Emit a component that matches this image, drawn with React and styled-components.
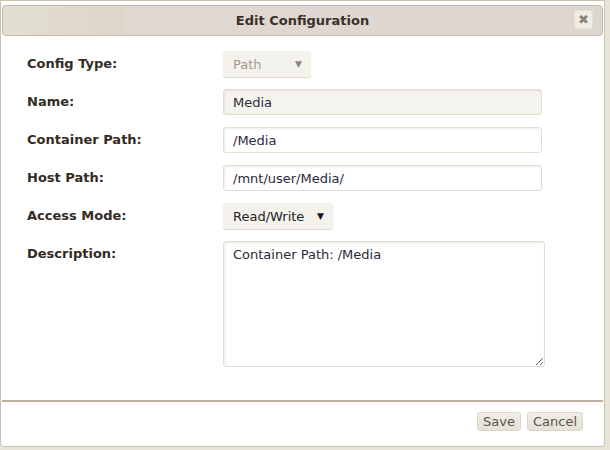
import React from "react";
import styled, { createGlobalStyle } from "styled-components";

const Global = createGlobalStyle`
  html, body { margin: 0; padding: 0; }
  body {
    background: #e8e4d8;
    font-family: "DejaVu Sans", Verdana, sans-serif;
    font-size: 13px;
    color: #333;
  }
`;

const Dialog = styled.div`
  box-sizing: border-box;
  width: 605px;
  height: 447px;
  background: #fff;
  border: 1px solid #c9c2b3;
  border-radius: 0 0 4px 4px;
  padding: 4px 1px 0;
  display: flex;
  flex-direction: column;
`;

const TitleBar = styled.div`
  box-sizing: border-box;
  height: 31px;
  border: 1px solid #c2baad;
  border-radius: 4px;
  background: linear-gradient(90deg, #e2ded0 0px, #ddd7c9 120px, #e0d9d3 122px, #ddd6d0 100%);
  display: flex;
  align-items: center;
  justify-content: center;
  position: relative;
`;

const Title = styled.span`
  font-weight: bold;
  font-size: 13px;
  color: #3a3028;
`;

const CloseButton = styled.button`
  position: absolute;
  right: 9px;
  top: 4px;
  width: 19px;
  height: 19px;
  padding: 0;
  border: 1px solid #e6e1d6;
  border-radius: 3px;
  background: #efece4;
  color: #8a8478;
  font-family: "DejaVu Sans", sans-serif;
  font-size: 13px;
  font-weight: bold;
  line-height: 17px;
  text-align: center;
`;

const Form = styled.div`
  display: grid;
  grid-template-columns: 196px 1fr;
  row-gap: 12px;
  padding: 15px 0 0 25px;
  align-items: start;
`;

const Label = styled.label`
  font-weight: bold;
  font-size: 13px;
  color: #332b24;
  height: 26px;
  line-height: 26px;
`;

const SelectBox = styled.div`
  box-sizing: border-box;
  width: ${(p) => p.$w}px;
  height: 26px;
  border-radius: 3px;
  background: #f4f2ec;
  box-shadow: 0 1px 1px #ddd6c6;
  display: flex;
  align-items: center;
  justify-content: space-between;
  padding: 0 9px 0 10px;
  color: ${(p) => (p.$disabled ? "#a09a8f" : "#222")};
  font-size: 13px;
`;

const Arrow = styled.span`
  font-size: 9px;
  color: ${(p) => (p.$disabled ? "#8c877c" : "#111")};
`;

const TextInput = styled.input`
  box-sizing: border-box;
  width: ${(p) => p.$w || 319}px;
  height: 26px;
  border: 1px solid #e2ddcf;
  border-radius: 3px;
  background: ${(p) => (p.readOnly ? "#f5f3ee" : "#fff")};
  box-shadow: inset 1px 1px 2px rgba(120, 110, 90, 0.12);
  padding: 0 9px;
  font-family: "DejaVu Sans", Verdana, sans-serif;
  font-size: 13px;
  color: #2a2a38;
  outline: none;
`;

const TextArea = styled.textarea`
  box-sizing: border-box;
  width: 322px;
  height: 126px;
  border: 1px solid #e2ddcf;
  border-radius: 3px;
  background: #fff;
  box-shadow: inset 1px 1px 3px rgba(120, 110, 90, 0.15);
  padding: 4px 9px;
  font-family: "DejaVu Sans", Verdana, sans-serif;
  font-size: 13px;
  line-height: 18px;
  color: #2a2a38;
  resize: both;
  outline: none;
  margin: 0;
`;

const Divider = styled.hr`
  margin: 33px 0 0;
  border: none;
  border-top: 2px solid #b9b19e;
  height: 0;
`;

const ButtonRow = styled.div`
  display: flex;
  justify-content: flex-end;
  gap: 6px;
  padding: 10px 20px 0 0;
`;

const Button = styled.button`
  box-sizing: border-box;
  height: 19px;
  padding: 0 5px;
  border: 1px solid #dcd6c7;
  border-radius: 3px;
  background: linear-gradient(#f1eee6, #e6e1d4);
  font-family: "DejaVu Sans", Verdana, sans-serif;
  font-size: 13px;
  color: #555;
  line-height: 16px;
`;

export default function App() {
  return (
    <>
      <Global />
      <Dialog>
        <TitleBar>
          <Title>Edit Configuration</Title>
          <CloseButton>✖</CloseButton>
        </TitleBar>
        <Form>
          <Label>Config Type:</Label>
          <SelectBox $w={88} $disabled>
            <span>Path</span>
            <Arrow $disabled>▼</Arrow>
          </SelectBox>

          <Label>Name:</Label>
          <TextInput readOnly defaultValue="Media" />

          <Label>Container Path:</Label>
          <TextInput defaultValue="/Media" />

          <Label>Host Path:</Label>
          <TextInput defaultValue="/mnt/user/Media/" />

          <Label>Access Mode:</Label>
          <SelectBox $w={110}>
            <span>Read/Write</span>
            <Arrow>▼</Arrow>
          </SelectBox>

          <Label>Description:</Label>
          <TextArea defaultValue="Container Path: /Media" />
        </Form>
        <Divider />
        <ButtonRow>
          <Button>Save</Button>
          <Button>Cancel</Button>
        </ButtonRow>
      </Dialog>
    </>
  );
}
